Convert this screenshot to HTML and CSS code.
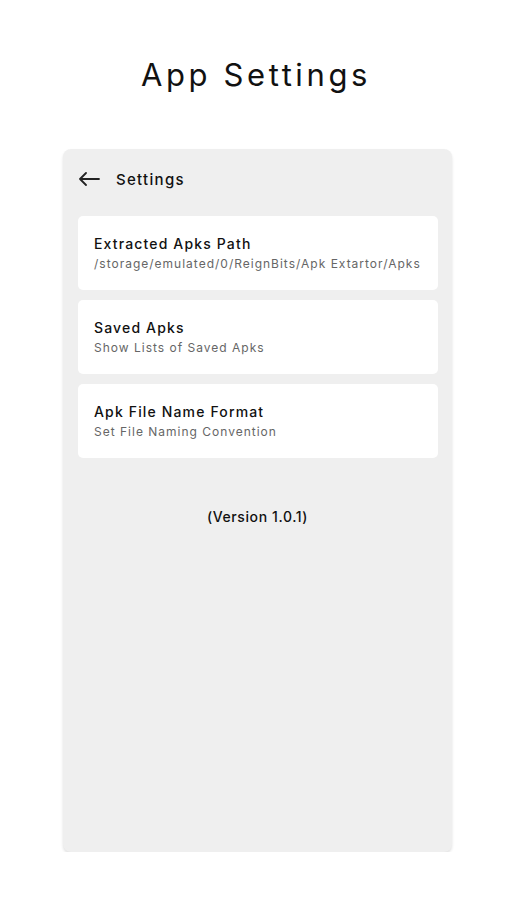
FILE: index.html
```html
<!DOCTYPE html>
<html lang="en">
<head>
    <meta charset="UTF-8">
    <title>App Settings</title>
    <link rel="stylesheet" href="styles.css">
</head>
<body>
    <h1 class="page-title">App Settings</h1>

    <div class="phone">
        <div class="appbar">
            <svg class="back" width="22" height="14" viewBox="0 0 22 14">
                <path d="M21 7H2M8 1L2 7l6 6" fill="none" stroke="#222" stroke-width="1.8" stroke-linecap="round" stroke-linejoin="round"/>
            </svg>
            <span class="appbar-title">Settings</span>
        </div>

        <div class="list">
            <div class="item">
                <div class="item-title">Extracted Apks Path</div>
                <div class="item-sub">/storage/emulated/0/ReignBits/Apk Extartor/Apks</div>
            </div>
            <div class="item">
                <div class="item-title">Saved Apks</div>
                <div class="item-sub">Show Lists of Saved Apks</div>
            </div>
            <div class="item">
                <div class="item-title">Apk File Name Format</div>
                <div class="item-sub">Set File Naming Convention</div>
            </div>
        </div>

        <div class="version">(Version 1.0.1)</div>
    </div>
</body>
</html>
```

FILE: styles.css
```css
body {
    margin: 0;
    background: #fff;
    font-family: Inter, "Open Sans", sans-serif;
    color: #111;
}
.page-title {
    margin: 0;
    padding-top: 56px;
    height: 93px;
    box-sizing: border-box;
    text-align: center;
    font-size: 31px;
    font-weight: 400;
    letter-spacing: 3.6px;
    line-height: 37px;
    padding-left: 6px;
}
.phone {
    width: 389px;
    height: 703px;
    margin: 56px 0 0 63px;
    background: #efefef;
    border-radius: 8px;
    box-shadow: 0 2px 3px rgba(0, 0, 0, 0.12);
}
.appbar {
    height: 60px;
    display: flex;
    align-items: center;
    padding-left: 15px;
    gap: 16px;
}
.appbar-title {
    font-size: 15px;
    font-weight: 500;
    letter-spacing: 1.3px;
}
.list {
    display: flex;
    flex-direction: column;
    gap: 10px;
    padding: 7px 14px 0 15px;
}
.item {
    height: 74px;
    background: #fff;
    border-radius: 5px;
    padding: 1px 16px 0;
    box-sizing: border-box;
    display: flex;
    flex-direction: column;
    justify-content: center;
    gap: 3px;
}
.item-title {
    font-size: 14px;
    font-weight: 500;
    line-height: 18px;
    letter-spacing: 1.15px;
}
.item-sub {
    font-size: 12px;
    line-height: 16px;
    color: #666;
    letter-spacing: 1px;
    white-space: nowrap;
}
.version {
    margin-top: 50px;
    text-align: center;
    font-size: 14px;
    line-height: 18px;
    font-weight: 500;
    letter-spacing: 0.6px;
}
```
